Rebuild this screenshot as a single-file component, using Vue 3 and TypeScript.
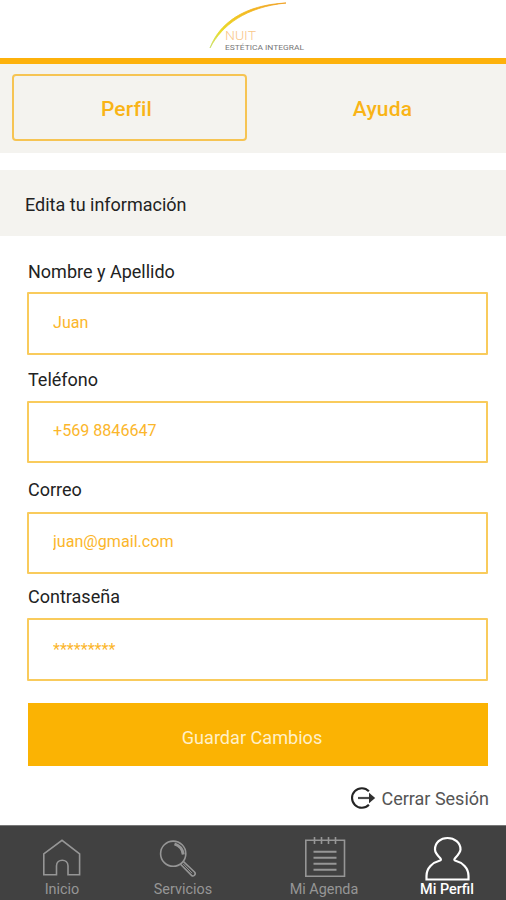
<script setup lang="ts">
import { ref } from 'vue'

interface Field {
  id: string
  label: string
  value: string
}

type NavIcon = 'home' | 'search' | 'agenda' | 'profile'

const tabs = ['Perfil', 'Ayuda']
const activeTab = ref('Perfil')

const fields = ref<Field[]>([
  { id: 'name', label: 'Nombre y Apellido', value: 'Juan' },
  { id: 'phone', label: 'Teléfono', value: '+569 8846647' },
  { id: 'email', label: 'Correo', value: 'juan@gmail.com' },
  { id: 'secret', label: 'Contraseña', value: '*********' },
])

const navItems: { icon: NavIcon; label: string }[] = [
  { icon: 'home', label: 'Inicio' },
  { icon: 'search', label: 'Servicios' },
  { icon: 'agenda', label: 'Mi Agenda' },
  { icon: 'profile', label: 'Mi Perfil' },
]
const activeNav = ref<NavIcon>('profile')
</script>

<template>
  <div class="screen">
    <header class="header">
      <svg class="logo" width="110" height="57" viewBox="0 0 110 57">
        <defs>
          <linearGradient id="arc" x1="0" y1="1" x2="1" y2="0">
            <stop offset="0" stop-color="#c9e070" />
            <stop offset="0.25" stop-color="#e9dc2c" />
            <stop offset="0.6" stop-color="#f3bd22" />
            <stop offset="1" stop-color="#ef9d1c" />
          </linearGradient>
        </defs>
        <path d="M10 48C19 24 43 5 86 3C46 7 22 25 10 48Z" fill="url(#arc)" stroke="url(#arc)" stroke-width="0.8" />
        <text class="logo-name" x="25" y="40" textLength="31" lengthAdjust="spacingAndGlyphs">NUIT</text>
        <text class="logo-sub" x="25" y="50" textLength="79" lengthAdjust="spacingAndGlyphs">ESTÉTICA INTEGRAL</text>
      </svg>
    </header>

    <nav class="tabs">
      <button
        v-for="tab in tabs"
        :key="tab"
        class="tab"
        :class="{ 'tab-active': tab === activeTab }"
        @click="activeTab = tab"
      >
        {{ tab }}
      </button>
    </nav>

    <h1 class="section-title">Edita tu información</h1>

    <form class="form" @submit.prevent>
      <div v-for="field in fields" :key="field.id" class="field" :class="`field-${field.id}`">
        <label class="label" :for="field.id">{{ field.label }}</label>
        <input :id="field.id" v-model="field.value" class="input" type="text" />
      </div>
      <button class="save" type="submit">Guardar Cambios</button>
    </form>

    <button class="logout">
      <svg class="logout-icon" width="26" height="24" viewBox="0 0 26 24">
        <path d="M18.9 5.2A9.8 9.8 0 1 0 18.9 18.8" fill="none" stroke="#242424" stroke-width="2.1" />
        <path d="M8 12H20" fill="none" stroke="#4a4a4a" stroke-width="2.2" />
        <path d="M19 6.8L25.2 12L19 17.2Z" fill="#303030" />
      </svg>
      <span class="logout-text">Cerrar Sesión</span>
    </button>

    <footer class="bottom-nav">
      <button
        v-for="item in navItems"
        :key="item.icon"
        class="nav-item"
        :class="[`nav-${item.icon}`, { 'nav-active': item.icon === activeNav }]"
        @click="activeNav = item.icon"
      >
        <svg class="nav-icon" width="48" height="48" viewBox="0 0 48 48">
          <path v-if="item.icon === 'home'" d="M5.8 41.8V20.8L24 7.3L41.6 20.8V41.8H30V32.8C30 25.3 18.5 25.3 18.5 32.8V41.8Z" />
          <g v-else-if="item.icon === 'search'">
            <circle cx="14.2" cy="20.7" r="12.6" />
            <path d="M21.5 31.2L32.5 42.4Q34 43.7 35.5 42.2T35.5 39L24.5 28.7" />
            <path class="thin" d="M24 30.7L33 40.2" />
            <path class="shine" d="M15.5 10.8Q23.5 13.5 24.3 21.5" />
          </g>
          <g v-else-if="item.icon === 'agenda'">
            <path d="M5.8 7.3H44.5V43.3H5.8Z" />
            <path d="M14.5 4V11M21.5 4V11M28.5 4V11M35.5 4V11" />
            <path class="lines" d="M13.5 18.7H36.5M13.5 24.7H36.5M13.5 30.7H36.5M13.5 36.7H36.5" />
          </g>
          <path
            v-else
            d="M3.5 46.5V43C3.5 35 9.5 29.5 17 27.5Q18.5 27 17.5 25.5C14 22 12 19.5 12 16.5C12 9.5 17.5 5 24.5 5S37.5 9.5 37.5 16.5C37.5 19.5 35 22 31.8 25.5Q30.8 27 32 27.5C39.5 29.5 45.5 35 45.5 43V46.5Z"
          />
        </svg>
        <span class="nav-label">{{ item.label }}</span>
      </button>
    </footer>
  </div>
</template>

<style>
body {
  margin: 0;
}
</style>

<style scoped>
.screen {
  display: flex;
  flex-direction: column;
  box-sizing: border-box;
  width: 506px;
  height: 900px;
  overflow: hidden;
  background: #fff;
  color: #222;
  font-family: Roboto, "Liberation Sans", sans-serif;
}

button {
  margin: 0;
  padding: 0;
  border: 0;
  background: none;
  font-family: inherit;
}

.header {
  flex: none;
  display: flex;
  height: 58px;
  padding-left: 200px;
  border-bottom: 6px solid #fdb10b;
}

.logo {
  display: block;
}

.logo-name {
  fill: #f9c78a;
  font-size: 13px;
  font-weight: 300;
}

.logo-sub {
  fill: #777;
  font-size: 8px;
}

.tabs {
  flex: none;
  display: grid;
  grid-template-columns: 235px 235px;
  column-gap: 18px;
  box-sizing: border-box;
  height: 89px;
  padding: 10px 6px 12px 12px;
  background: #f4f3ef;
}

.tab {
  padding: 2px 6px 0 0;
  border: 2px solid transparent;
  border-radius: 4px;
  color: #f9b417;
  font-size: 21px;
  font-weight: 500;
  letter-spacing: 0.15px;
}

.tab:last-child {
  padding-right: 0;
}

.tab-active {
  border-color: #f6c453;
}

.section-title {
  flex: none;
  box-sizing: border-box;
  height: 66px;
  margin: 17px 0 0;
  padding: 2px 0 0 25px;
  background: #f4f3ef;
  font-size: 18px;
  font-weight: 400;
  line-height: 66px;
}

.form {
  flex: none;
  display: grid;
  grid-template-rows: 109px 110px 107px 122px 63px;
  padding: 19px 18px 0 27px;
}

.field {
  display: flex;
  flex-direction: column;
}

.label {
  box-sizing: border-box;
  height: 37px;
  padding: 0 0 0 1px;
  font-size: 18px;
  line-height: 31px;
}

.field-name .label {
  padding-top: 1px;
}

.input {
  box-sizing: border-box;
  width: 461px;
  height: 63px;
  padding: 0 24px 2px;
  border: 2px solid #f9cb5c;
  border-radius: 1px;
  outline: none;
  background: #fff;
  color: #fbb62b;
  font-family: inherit;
  font-size: 16.1px;
}

.field-phone .input,
.field-email .input {
  height: 62px;
  padding-bottom: 4px;
}

.field-email .input {
  margin-top: 1px;
}

.field-secret .input {
  padding-bottom: 0;
}

.save {
  width: 460px;
  height: 63px;
  margin-left: 1px;
  padding: 5px 12px 0 0;
  background: #fbb303;
  color: #fff0c8;
  font-size: 18.1px;
}

.logout {
  flex: none;
  display: flex;
  align-items: center;
  align-self: flex-end;
  gap: 5px;
  height: 24px;
  margin: 20px 17px 0 0;
  color: #555;
  font-size: 18px;
}

.bottom-nav {
  display: grid;
  grid-template-columns: 124px 118px 164px 82px;
  flex: none;
  box-sizing: border-box;
  height: 75px;
  margin-top: auto;
  border-top: 1px solid #777;
  background: #414141;
}

.nav-item {
  display: flex;
  flex-direction: column;
  align-items: center;
  padding-top: 7px;
  color: #969696;
}

.nav-icon {
  flex: none;
  fill: none;
  stroke: currentColor;
  stroke-width: 1.6;
}

.thin {
  stroke-width: 1;
}

.shine {
  stroke-width: 3;
}

.lines {
  stroke-width: 2;
}

.nav-label {
  font-size: 14.4px;
  line-height: 17px;
}

.nav-active {
  color: #fff;
}

.nav-active .nav-icon {
  stroke-width: 2.2;
}

.nav-active .nav-label {
  font-weight: 500;
}
</style>
